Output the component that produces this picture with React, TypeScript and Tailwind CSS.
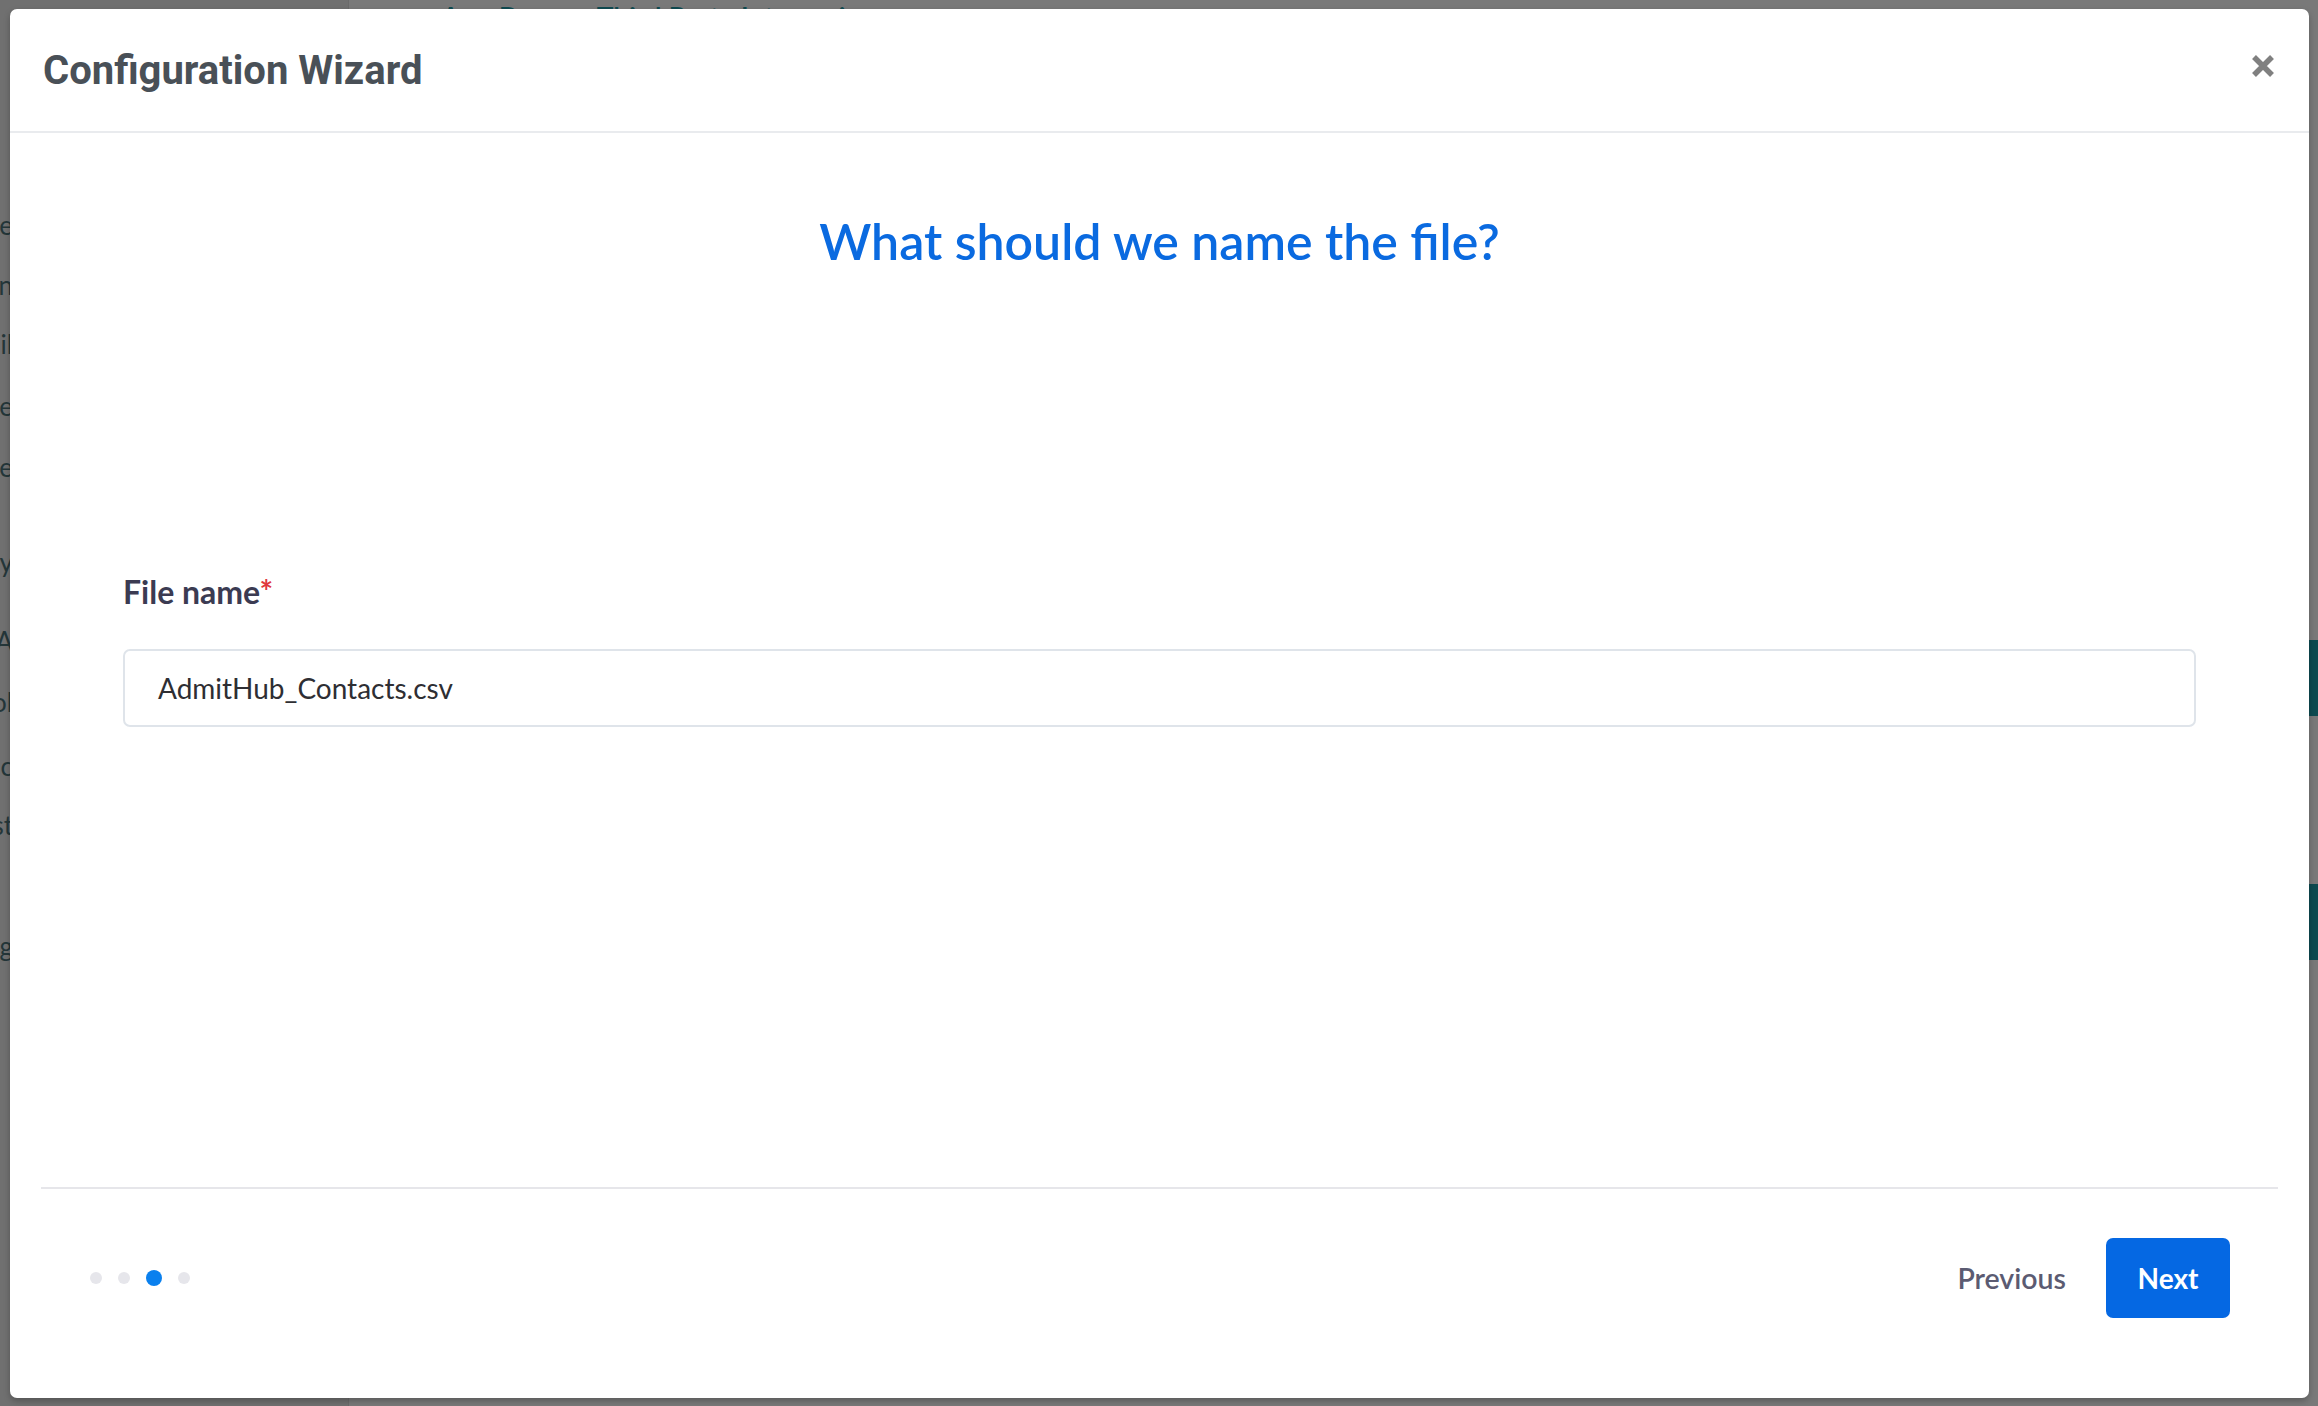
import React from "react";

const sideWords: { t: string; y: number }[] = [
  { t: "Name", y: 212 },
  { t: "Option", y: 272 },
  { t: "Email", y: 331 },
  { t: "Phone", y: 393 },
  { t: "Type", y: 454 },
  { t: "Daily", y: 549 },
  { t: "AppA", y: 628 },
  { t: "Pool", y: 689 },
  { t: "Sync", y: 753 },
  { t: "Last", y: 812 },
  { t: "Log", y: 933 },
];

export default function App() {
  return (
    <div className="relative h-[1406px] w-[2318px] overflow-hidden bg-[#797979]">
      {/* background page (under overlay) */}
      <div className="absolute inset-0 flex">
        <div className="relative h-full w-[349px] border-r border-[#6a6a6a] bg-[#707070]">
          {sideWords.map((w) => (
            <div
              key={w.t}
              className="absolute right-[335px] w-[120px] text-right text-[26px] leading-[26px] text-[#243639]"
              style={{ top: w.y, fontFamily: "Lato, sans-serif" }}
            >
              {w.t}
            </div>
          ))}
        </div>
        <div className="relative flex-1">
          <div
            className="absolute left-[92px] top-[2px] text-[28px] leading-[30px] font-semibold text-[#0f4a50]"
            style={{ fontFamily: "Lato, sans-serif" }}
          >
            App Beacon Third Party Integrations
          </div>
          <div className="absolute right-0 top-[640px] h-[76px] w-[40px] bg-[#0d4a50]" />
          <div className="absolute right-0 top-[884px] h-[76px] w-[40px] bg-[#0d4a50]" />
        </div>
      </div>

      {/* modal */}
      <div className="absolute left-[10px] top-[9px] flex h-[1389px] w-[2299px] flex-col rounded-[7px] bg-white shadow-[0_3px_6px_rgba(0,0,0,0.25)]">
        {/* header */}
        <div className="flex h-[124px] shrink-0 items-center justify-between border-b-2 border-[#e9ebee] pl-[33px] pr-[34px]">
          <h1
            className="mt-[2px] text-[40px] font-bold leading-none text-[#495057]"
            style={{ fontFamily: "Roboto, sans-serif" }}
          >
            Configuration Wizard
          </h1>
          <svg width="24" height="24" viewBox="0 0 24 24" className="mb-[8px]">
            <path d="M3 3 L21 21 M21 3 L3 21" stroke="#808080" strokeWidth="5.5" strokeLinecap="butt" />
          </svg>
        </div>

        {/* body */}
        <div className="flex flex-1 flex-col px-[113px] pt-[78px]" style={{ fontFamily: "Lato, sans-serif" }}>
          <h2 className="text-center text-[50px] font-semibold leading-[60px] text-[#0a6ae0]">
            What should we name the file?
          </h2>
          <label className="mt-[301px] text-[32px] font-bold leading-[40px] text-[#3b3b52]">
            File name<span className="text-[#e0393e]">*</span>
          </label>
          <div className="mt-[37px] flex h-[78px] items-center rounded-[7px] border-2 border-[#dfe4ea] px-[33px] text-[28px] text-[#2e2e33]">
            AdmitHub_Contacts.csv
          </div>
        </div>

        <div className="mx-[31px] h-[2px] shrink-0 bg-[#e6e6ea]" />

        {/* footer */}
        <div
          className="flex shrink-0 items-center justify-between pb-[80px] pl-[80px] pr-[79px] pt-[49px]"
          style={{ fontFamily: "Lato, sans-serif" }}
        >
          <div className="flex items-center gap-4">
            <span className="h-3 w-3 rounded-full bg-[#e6e6eb]" />
            <span className="h-3 w-3 rounded-full bg-[#e6e6eb]" />
            <span className="h-4 w-4 rounded-full bg-[#0a80ee]" />
            <span className="h-3 w-3 rounded-full bg-[#e6e6eb]" />
          </div>
          <div className="flex items-center gap-[40px]">
            <button className="text-[28.5px] font-semibold text-[#5b5b72]">Previous</button>
            <button className="flex h-[80px] w-[124px] items-center justify-center rounded-[7px] bg-[#0568e3] text-[28px] font-bold text-white">
              Next
            </button>
          </div>
        </div>
      </div>
    </div>
  );
}
